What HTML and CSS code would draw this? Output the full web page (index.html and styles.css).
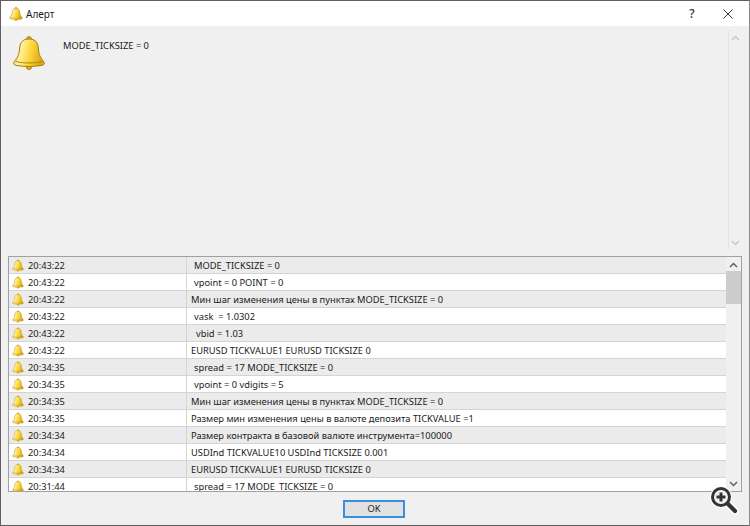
FILE: index.html
```html
<!DOCTYPE html>
<html lang="ru">
<head>
<meta charset="utf-8">
<title>Алерт</title>
<link rel="stylesheet" href="styles.css">
</head>
<body>
<svg class="defs" width="0" height="0" aria-hidden="true">
  <defs>
    <linearGradient id="gold" x1="0" y1="0" x2="1" y2="0.2">
      <stop offset="0" stop-color="#d9a815"/>
      <stop offset="0.3" stop-color="#fff0a0"/>
      <stop offset="0.6" stop-color="#fcd93f"/>
      <stop offset="1" stop-color="#dca80f"/>
    </linearGradient>
    <symbol id="bell" viewBox="0 0 34 34">
      <circle cx="17" cy="3" r="2.4" fill="#d9a81c" stroke="#a67c10" stroke-width=".8"/>
      <circle cx="17" cy="31" r="2.6" fill="#e0ae20" stroke="#a67c10" stroke-width=".8"/>
      <path d="M17 3C10 3 8 7 7.500 13C7 19 6 21 2 26C1 28 2 29 5 29.500C12 30.800 22 30.800 29 29.500C32 29 33 28 32 26C28 21 27 19 26.500 13C26 7 24 3 17 3Z" fill="url(#gold)" stroke="#a67c10" stroke-width="1"/>
      <path d="M4 25.500C12 27.500 22 27.500 30 25.500" fill="none" stroke="#a67c10" stroke-width=".9"/>
    </symbol>
  </defs>
</svg>
<div class="window">
  <header class="titlebar">
    <svg class="title-bell"><use href="#bell"/></svg>
    <span class="title-text">Алерт</span>
    <span class="help">?</span>
    <svg class="close" viewBox="0 0 10 10"><path d="M.5 .5L9.500 9.500M9.500 .5L.5 9.500" stroke="#333" stroke-width="1" fill="none"/></svg>
  </header>
  <section class="message">
    <svg class="big-bell"><use href="#bell"/></svg>
    <p class="message-text">MODE_TICKSIZE = 0</p>
    <div class="msg-scroll">
      <svg class="chev" viewBox="0 0 9 6"><path d="M1 5L4.500 1.500L8 5" class="chev-light"/></svg>
      <svg class="chev" viewBox="0 0 9 6"><path d="M1 1L4.500 4.500L8 1" class="chev-light"/></svg>
    </div>
  </section>
  <section class="list">
    <div class="rows">
      <div class="row"><svg class="row-bell"><use href="#bell"/></svg><span class="time">20:43:22</span><span class="msg pad2">MODE_TICKSIZE = 0</span></div>
      <div class="row"><svg class="row-bell"><use href="#bell"/></svg><span class="time">20:43:22</span><span class="msg pad3">vpoint = 0 POINT = 0</span></div>
      <div class="row"><svg class="row-bell"><use href="#bell"/></svg><span class="time">20:43:22</span><span class="msg">Мин шаг изменения цены в пунктах MODE_TICKSIZE = 0</span></div>
      <div class="row"><svg class="row-bell"><use href="#bell"/></svg><span class="time">20:43:22</span><span class="msg pad3">vask &nbsp;= 1.0302</span></div>
      <div class="row"><svg class="row-bell"><use href="#bell"/></svg><span class="time">20:43:22</span><span class="msg pad5">vbid = 1.03</span></div>
      <div class="row"><svg class="row-bell"><use href="#bell"/></svg><span class="time">20:43:22</span><span class="msg">EURUSD TICKVALUE1 EURUSD TICKSIZE 0</span></div>
      <div class="row"><svg class="row-bell"><use href="#bell"/></svg><span class="time">20:34:35</span><span class="msg pad3">spread = 17 MODE_TICKSIZE = 0</span></div>
      <div class="row"><svg class="row-bell"><use href="#bell"/></svg><span class="time">20:34:35</span><span class="msg pad3">vpoint = 0 vdigits = 5</span></div>
      <div class="row"><svg class="row-bell"><use href="#bell"/></svg><span class="time">20:34:35</span><span class="msg">Мин шаг изменения цены в пунктах MODE_TICKSIZE = 0</span></div>
      <div class="row"><svg class="row-bell"><use href="#bell"/></svg><span class="time">20:34:35</span><span class="msg">Размер мин изменения цены в валюте депозита TICKVALUE =1</span></div>
      <div class="row"><svg class="row-bell"><use href="#bell"/></svg><span class="time">20:34:34</span><span class="msg">Размер контракта в базовой валюте инструмента=100000</span></div>
      <div class="row"><svg class="row-bell"><use href="#bell"/></svg><span class="time">20:34:34</span><span class="msg">USDInd TICKVALUE10 USDInd TICKSIZE 0.001</span></div>
      <div class="row"><svg class="row-bell"><use href="#bell"/></svg><span class="time">20:34:34</span><span class="msg">EURUSD TICKVALUE1 EURUSD TICKSIZE 0</span></div>
      <div class="row"><svg class="row-bell"><use href="#bell"/></svg><span class="time">20:31:44</span><span class="msg pad3">spread = 17 MODE_TICKSIZE = 0</span></div>
    </div>
    <div class="scrollbar">
      <svg class="chev" viewBox="0 0 9 6"><path d="M1 5L4.500 1.500L8 5" class="chev-dark"/></svg>
      <div class="track"><div class="thumb"></div></div>
      <svg class="chev" viewBox="0 0 9 6"><path d="M1 1L4.500 4.500L8 1" class="chev-dark"/></svg>
    </div>
  </section>
  <footer class="footer">
    <button class="ok" type="button">OK</button>
  </footer>
  <svg class="zoom" viewBox="0 0 30 30">
    <path d="M19 19L26 26" stroke="#fff" stroke-width="8" stroke-linecap="round"/>
    <circle cx="12" cy="12" r="11" fill="#fff"/>
    <path d="M19 19L26 26" stroke="#333" stroke-width="4.200" stroke-linecap="round"/>
    <circle cx="12" cy="12" r="8.500" fill="#f4f4f4" stroke="#333" stroke-width="3"/>
    <path d="M12 7.500V16.500M7.500 12H16.500" stroke="#333" stroke-width="3"/>
  </svg>
</div>
</body>
</html>
```
FILE: styles.css
```css
* { box-sizing: border-box; }
html, body { margin: 0; padding: 0; }
body { width: 750px; height: 526px; overflow: hidden; font-family: "Noto Sans", "Liberation Sans", sans-serif; font-size: 9.3px; color: #1a1a1a; }
.defs { position: absolute; }
.window { position: relative; width: 750px; height: 526px; background: #f0f0f0; border: 1px solid #5f5f5f; border-right-color: #8a8a8a; display: flex; flex-direction: column; }
.titlebar { height: 25px; flex: none; background: #fff; display: flex; align-items: center; padding-left: 8px; }
.title-bell { width: 14px; height: 14px; }
.title-text { margin-left: 3px; font-size: 10px; flex: 1; }
.help { width: 14px; text-align: center; font-size: 12px; font-weight: 500; color: #333; margin-right: 24px; }
.close { width: 10px; height: 10px; margin-right: 16px; }
.message { height: 230px; flex: none; display: flex; padding: 10px 7px 0 11px; position: relative; }
.big-bell { width: 34px; height: 34px; flex: none; }
.message-text { margin: 3px 0 0 17px; flex: 1; }
.msg-scroll { width: 14px; height: 220px; margin-top: -6px; border-left: 1px solid #e4e4e4; display: flex; flex-direction: column; justify-content: space-between; align-items: center; padding: 5px 0 4px; }
.list { height: 236px; flex: none; margin: 0 7px; background: #fff; border: 1px solid #a0a0a0; display: flex; overflow: hidden; }
.rows { flex: 1; min-width: 0; }
.row { height: 17px; display: flex; align-items: center; border-bottom: 1px solid #d4d4d4; white-space: nowrap; padding-left: 3px; }
.row:nth-child(odd) { background: #ebebeb; }
.row-bell { width: 12px; height: 13px; flex: none; }
.time { width: 163px; padding-left: 4px; border-right: 1px solid #d4d4d4; height: 16px; line-height: 18px; flex: none; }
.msg { padding-left: 4px; line-height: 18px; height: 16px; }
.pad2 { padding-left: 7px; }
.pad3 { padding-left: 7px; }
.pad5 { padding-left: 9px; }
.scrollbar { width: 15px; flex: none; background: #f0f0f0; display: flex; flex-direction: column; align-items: center; padding: 5px 0 4px; }
.track { flex: 1; width: 100%; padding-top: 3px; }
.thumb { width: 100%; height: 33px; background: #cdcdcd; }
.chev { width: 9px; height: 6px; flex: none; }
.chev-light { fill: none; stroke: #c8c8c8; stroke-width: 1.500; }
.chev-dark { fill: none; stroke: #606060; stroke-width: 1.500; }
.footer { flex: 1; display: flex; justify-content: center; align-items: center; padding-right: 2px; }
.ok { width: 62px; height: 18px; padding: 0; background: #e1e1e1; border: 2px solid #3a8fdc; font-family: inherit; font-size: 9.300px; color: #1a1a1a; }
.zoom { position: absolute; left: 708px; top: 484px; width: 30px; height: 30px; }
```
